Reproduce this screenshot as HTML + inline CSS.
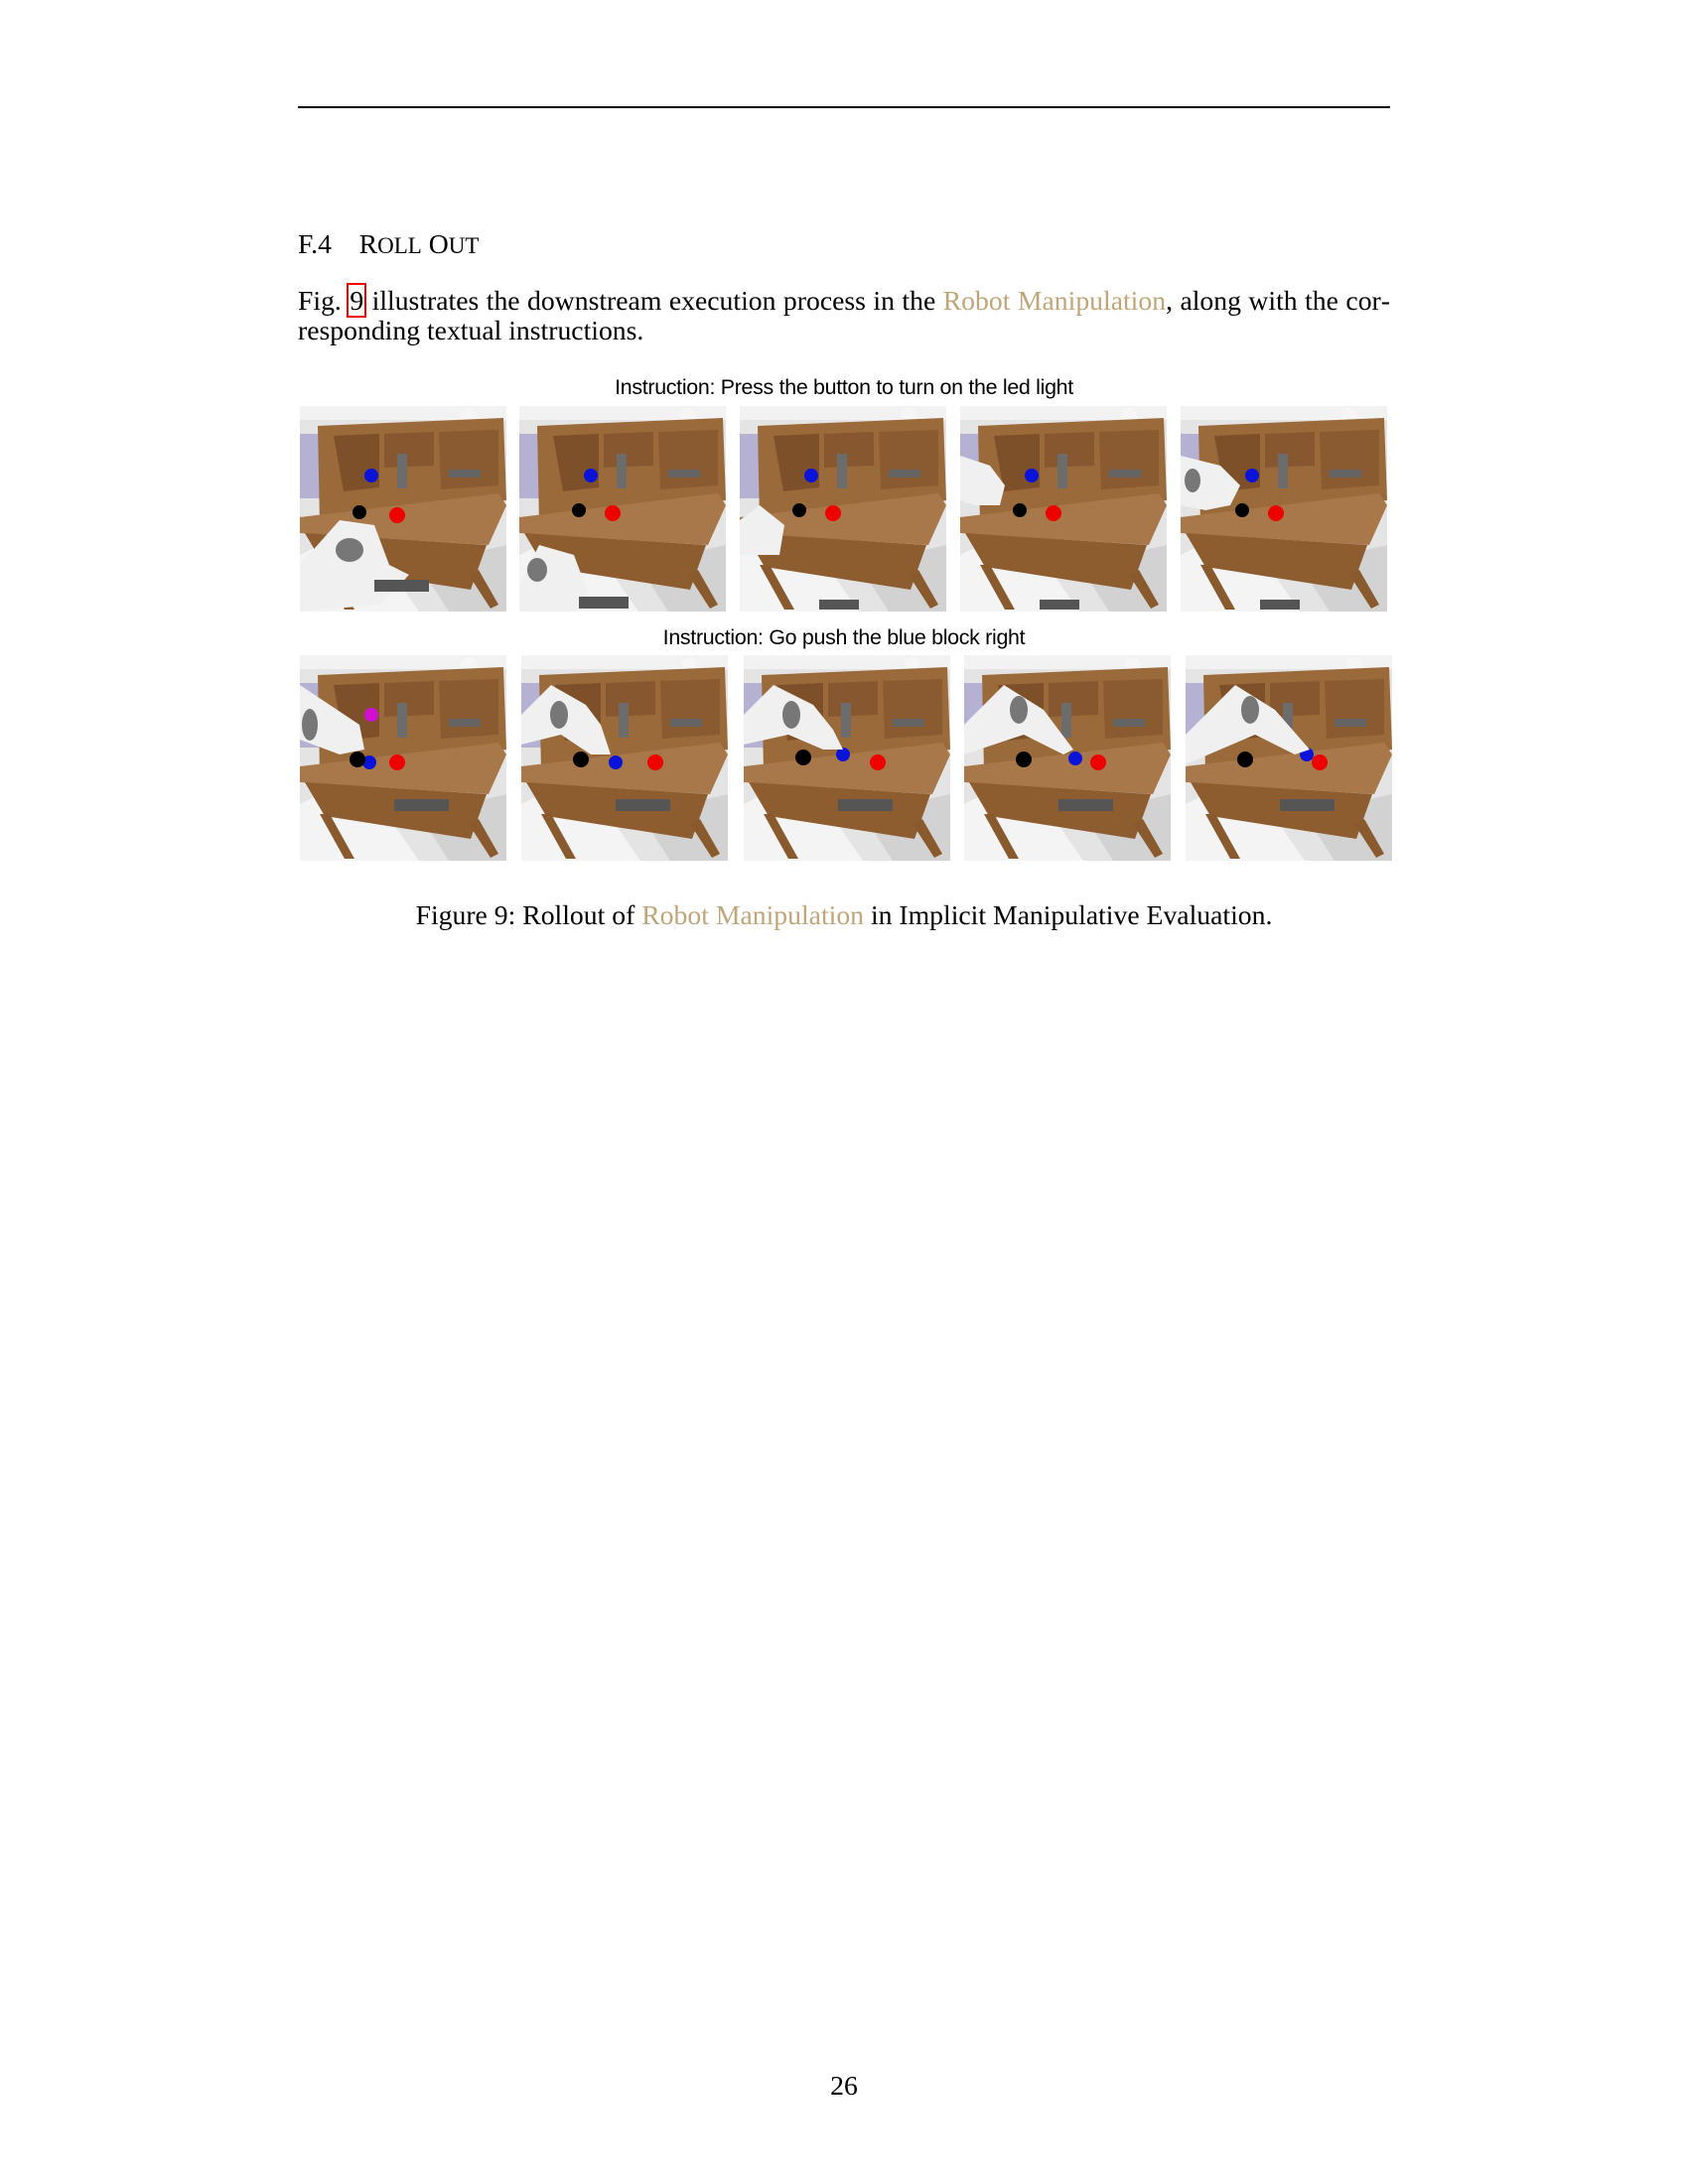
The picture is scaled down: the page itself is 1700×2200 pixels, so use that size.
<!DOCTYPE html>
<html><head><meta charset="utf-8"><style>
body{margin:0;background:#fff;}
.page{position:relative;width:1700px;height:2200px;background:#fff;font-family:"Liberation Serif",serif;color:#000;}
.rule{position:absolute;left:300px;top:107px;width:1100px;height:1.5px;background:#000;}
.h{position:absolute;left:300px;top:230px;font-size:27.7px;}
.sc{font-size:23px;}
.p{position:absolute;left:300px;top:288px;width:1100px;font-size:27.7px;line-height:30px;text-align:justify;}
.lk{color:#bfa67a;}
.box{outline:2px solid #e00;outline-offset:0px;padding:0 1px;}
.ins{position:absolute;left:0;width:1700px;text-align:center;font-family:"Liberation Sans",sans-serif;font-size:21.4px;letter-spacing:-0.3px;}
.im{position:absolute;width:208px;height:207px;}
.cap{position:absolute;left:0;width:1700px;text-align:center;top:906px;font-size:27.7px;}
.pn{position:absolute;left:0;width:1700px;text-align:center;top:2085px;font-size:27.7px;}
</style></head><body><div class="page">
<svg width="0" height="0" style="position:absolute">
<defs>
<symbol id="desk" viewBox="0 0 208 207" preserveAspectRatio="none">
<rect width="208" height="207" fill="#e4e4e4"/>
<polygon points="0,150 60,120 120,207 0,207" fill="#f4f4f4"/>
<polygon points="120,160 208,140 208,207 150,207" fill="#d2d2d2"/>
<rect x="0" y="0" width="208" height="14" fill="#f2f2f2"/>
<rect x="0" y="28" width="20" height="65" fill="#b5b1d2"/>
<circle cx="170" cy="10" r="8" fill="#f6f6f6"/>
<polygon points="18,20 205,12 208,95 20,118" fill="#9b6a3b"/>
<polygon points="34,30 80,28 80,82 44,86" fill="#7e5029"/>
<polygon points="85,28 135,26 135,60 85,62" fill="#875830"/>
<polygon points="140,26 200,24 200,80 142,84" fill="#8a5a31"/>
<rect x="98" y="48" width="10" height="35" fill="#6c6c6c"/>
<rect x="150" y="64" width="32" height="8" fill="#646464"/>
<polygon points="0,112 200,88 208,100 190,140 0,128" fill="#a9784a"/>
<polygon points="5,128 188,140 172,185 25,162" fill="#8d5d30"/>
<polygon points="20,160 30,160 55,205 45,205" fill="#8a5a2f"/>
<polygon points="170,170 180,165 200,200 192,204" fill="#8a5a2f"/>
</symbol>
</defs></svg>
<div class="rule"></div>
<div class="h">F.4&nbsp;&nbsp;&nbsp;&nbsp;R<span class="sc">OLL</span> O<span class="sc">UT</span></div>
<div class="p">Fig. <span class="box">9</span> illustrates the downstream execution process in the <span class="lk">Robot Manipulation</span>, along with the cor­responding textual instructions.</div>
<div class="ins" style="top:378px">Instruction: Press the button to turn on the led light</div>
<div class="ins" style="top:630px">Instruction: Go push the blue block right</div>

<!-- row 1 -->
<svg class="im" style="left:302px;top:409px" viewBox="0 0 208 207" preserveAspectRatio="none"><use href="#desk"/><circle cx="72" cy="70" r="7" fill="#0a14d8"/><circle cx="60" cy="107" r="7" fill="#000"/><circle cx="98" cy="110" r="8" fill="#e00"/><polygon points="0,160 40,115 75,120 90,160 110,170 80,200 0,207" fill="#f0f0f0"/><ellipse cx="50" cy="145" rx="14" ry="12" fill="#777"/><rect x="75" y="175" width="55" height="12" fill="#555"/></svg>
<svg class="im" style="left:523px;top:409px" viewBox="0 0 208 207" preserveAspectRatio="none"><use href="#desk"/><circle cx="72" cy="70" r="7" fill="#0a14d8"/><circle cx="60" cy="105" r="7" fill="#000"/><circle cx="94" cy="108" r="8" fill="#e00"/><polygon points="0,180 20,140 55,150 70,190 55,207 0,207" fill="#f0f0f0"/><ellipse cx="18" cy="165" rx="10" ry="12" fill="#777"/><rect x="60" y="192" width="50" height="12" fill="#555"/></svg>
<svg class="im" style="left:745px;top:409px" viewBox="0 0 208 207" preserveAspectRatio="none"><use href="#desk"/><circle cx="72" cy="70" r="7" fill="#0a14d8"/><circle cx="60" cy="105" r="7" fill="#000"/><circle cx="94" cy="108" r="8" fill="#e00"/><polygon points="0,115 20,100 45,120 40,150 0,150" fill="#f0f0f0"/><rect x="80" y="195" width="40" height="10" fill="#555"/></svg>
<svg class="im" style="left:967px;top:409px" viewBox="0 0 208 207" preserveAspectRatio="none"><use href="#desk"/><circle cx="72" cy="70" r="7" fill="#0a14d8"/><circle cx="60" cy="105" r="7" fill="#000"/><circle cx="94" cy="108" r="8" fill="#e00"/><polygon points="0,50 30,60 45,80 40,100 15,100 0,95" fill="#f0f0f0"/><rect x="80" y="195" width="40" height="10" fill="#555"/></svg>
<svg class="im" style="left:1189px;top:409px" viewBox="0 0 208 207" preserveAspectRatio="none"><use href="#desk"/><circle cx="72" cy="70" r="7" fill="#0a14d8"/><circle cx="62" cy="105" r="7" fill="#000"/><circle cx="96" cy="108" r="8" fill="#e00"/><polygon points="0,50 40,60 60,80 50,100 25,105 0,100" fill="#f0f0f0"/><ellipse cx="12" cy="75" rx="8" ry="12" fill="#777"/><rect x="80" y="195" width="40" height="10" fill="#555"/></svg>

<!-- row 2 -->
<svg class="im" style="left:302px;top:660px" viewBox="0 0 208 207" preserveAspectRatio="none"><use href="#desk"/><circle cx="70" cy="108" r="7" fill="#0a14d8"/><circle cx="58" cy="105" r="8" fill="#000"/><circle cx="98" cy="108" r="8" fill="#e00"/><circle cx="72" cy="60" r="7" fill="#d010d0"/><polygon points="0,30 30,50 60,70 65,95 40,100 0,85" fill="#f0f0f0"/><ellipse cx="10" cy="70" rx="8" ry="16" fill="#777"/><rect x="95" y="145" width="55" height="12" fill="#555"/></svg>
<svg class="im" style="left:525px;top:660px" viewBox="0 0 208 207" preserveAspectRatio="none"><use href="#desk"/><circle cx="95" cy="108" r="7" fill="#0a14d8"/><circle cx="60" cy="105" r="8" fill="#000"/><circle cx="135" cy="108" r="8" fill="#e00"/><polygon points="0,60 30,30 65,50 80,70 90,100 70,100 40,80 0,90" fill="#f0f0f0"/><ellipse cx="38" cy="60" rx="9" ry="14" fill="#777"/><rect x="95" y="145" width="55" height="12" fill="#555"/></svg>
<svg class="im" style="left:749px;top:660px" viewBox="0 0 208 207" preserveAspectRatio="none"><use href="#desk"/><circle cx="100" cy="100" r="7" fill="#0a14d8"/><circle cx="60" cy="103" r="8" fill="#000"/><circle cx="135" cy="108" r="8" fill="#e00"/><polygon points="0,60 30,30 70,50 90,75 100,95 80,95 45,80 0,90" fill="#f0f0f0"/><ellipse cx="48" cy="60" rx="9" ry="14" fill="#777"/><rect x="95" y="145" width="55" height="12" fill="#555"/></svg>
<svg class="im" style="left:971px;top:660px" viewBox="0 0 208 207" preserveAspectRatio="none"><use href="#desk"/><circle cx="112" cy="104" r="7" fill="#0a14d8"/><circle cx="60" cy="105" r="8" fill="#000"/><circle cx="135" cy="108" r="8" fill="#e00"/><polygon points="0,70 40,30 80,55 110,95 100,100 60,80 0,100" fill="#f0f0f0"/><ellipse cx="55" cy="55" rx="9" ry="14" fill="#777"/><rect x="95" y="145" width="55" height="12" fill="#555"/></svg>
<svg class="im" style="left:1194px;top:660px" viewBox="0 0 208 207" preserveAspectRatio="none"><use href="#desk"/><circle cx="122" cy="100" r="7" fill="#0a14d8"/><circle cx="60" cy="105" r="8" fill="#000"/><circle cx="135" cy="108" r="8" fill="#e00"/><polygon points="0,80 50,30 90,55 125,95 110,100 70,80 0,110" fill="#f0f0f0"/><ellipse cx="65" cy="55" rx="9" ry="14" fill="#777"/><rect x="95" y="145" width="55" height="12" fill="#555"/></svg>

<div class="cap">Figure 9: Rollout of <span class="lk">Robot Manipulation</span> in Implicit Manipulative Evaluation.</div>
<div class="pn">26</div>
</div></body></html>
